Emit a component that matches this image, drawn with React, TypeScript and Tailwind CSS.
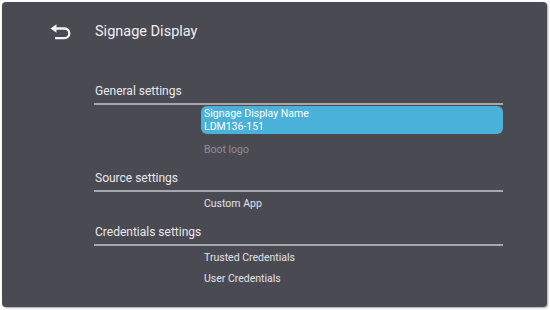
import React from "react";

function BackIcon() {
  return (
    <svg width="21" height="16" viewBox="0 0 21 16" className="shrink-0">
      <path d="M0.5 4.5 L6.5 0.3 V8.7 Z" fill="#f2f2f2" />
      <path
        d="M4.5 4.5 H14.5 A4.8 4.8 0 0 1 14.5 14.1 H5"
        fill="none"
        stroke="#f2f2f2"
        strokeWidth="2.3"
      />
    </svg>
  );
}

function Heading({ label, className }: { label: string; className: string }) {
  return (
    <div
      className={`flex items-center border-b-2 border-[#a7a7ad] pl-[1px] text-[12px] text-[#e9e9ec] ${className}`}
    >
      {label}
    </div>
  );
}

function Item({ label, className, dim }: { label: string; className: string; dim?: boolean }) {
  return (
    <div
      className={`flex items-center pl-[110px] text-[10.5px] ${dim ? "text-[#8f8f95]" : "text-[#e2e2e6]"} ${className}`}
    >
      {label}
    </div>
  );
}

export default function App() {
  return (
    <div className="h-[310px] w-[550px] bg-white p-[2px]" style={{ fontFamily: "Roboto, 'Noto Sans', sans-serif" }}>
      <div className="flex h-[305px] w-[545px] flex-col rounded-[4px] bg-[#4a4a53] shadow-[1px_1px_2px_rgba(0,0,0,0.35)]">
        <div className="flex h-[60px] items-center pl-[48px]">
          <BackIcon />
          <span className="ml-[24px] text-[14.5px] text-[#efeff2]">Signage Display</span>
        </div>

        <div className="mt-[16px] ml-[92px] flex w-[409px] flex-col">
          <Heading label="General settings" className="h-[27px] pt-[1px]" />
          <div className="ml-[107px] mt-[1px] flex flex-col rounded-[6px] bg-[#4ab2d9] px-[3px] py-[1px] text-[10.5px] leading-[13px] text-white">
            <span>Signage Display Name</span>
            <span>LDM136-151</span>
          </div>
          <Item label="Boot logo" className="h-[32px]" dim />

          <Heading label="Source settings" className="h-[26px]" />
          <Item label="Custom App" className="h-[24px]" />

          <Heading label="Credentials settings" className="h-[30px] pt-[3px]" />
          <Item label="Trusted Credentials" className="h-[23px]" />
          <Item label="User Credentials" className="h-[20px]" />
        </div>
      </div>
    </div>
  );
}
